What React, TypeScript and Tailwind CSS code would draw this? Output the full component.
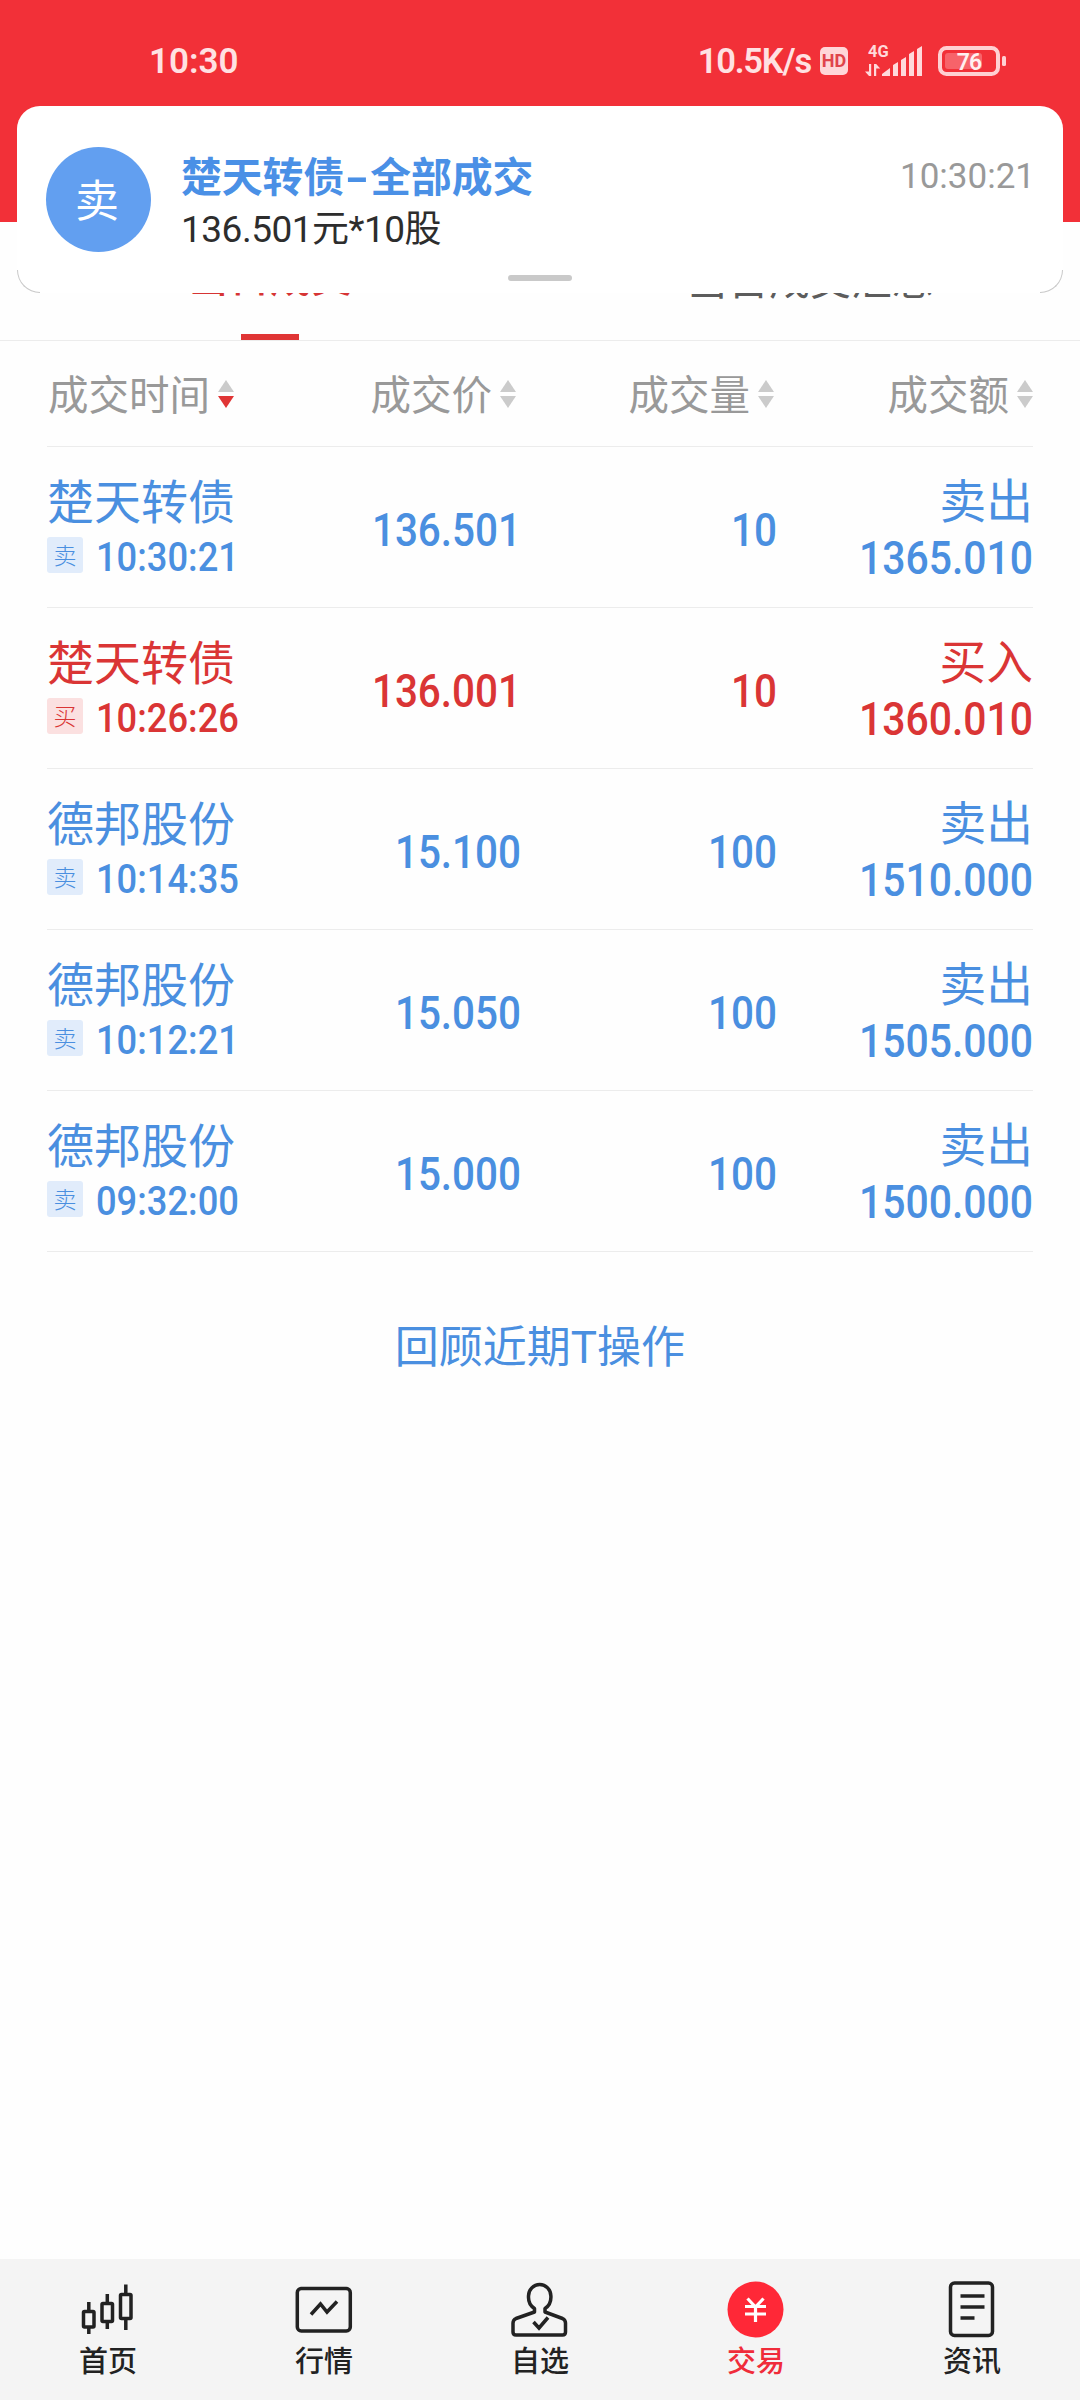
import clsx from "clsx";
import type { ReactNode } from "react";

type Side = "sell" | "buy";

const trades: { name: string; side: Side; time: string; price: string; volume: string; amount: string }[] = [
  { name: "楚天转债", side: "sell", time: "10:30:21", price: "136.501", volume: "10", amount: "1365.010" },
  { name: "楚天转债", side: "buy", time: "10:26:26", price: "136.001", volume: "10", amount: "1360.010" },
  { name: "德邦股份", side: "sell", time: "10:14:35", price: "15.100", volume: "100", amount: "1510.000" },
  { name: "德邦股份", side: "sell", time: "10:12:21", price: "15.050", volume: "100", amount: "1505.000" },
  { name: "德邦股份", side: "sell", time: "09:32:00", price: "15.000", volume: "100", amount: "1500.000" },
];

function StatusBar() {
  return (
    <div className="flex h-[222px] items-start justify-between bg-[#f23038] pl-[149px] pr-[74px] pt-[41px] text-[#ffe1e2]">
      <span className="text-[35px] font-semibold leading-[41px]">10:30</span>
      <div className="flex h-[39px] items-center">
        <span className="pt-[2px] text-[34.5px] font-semibold leading-[41px] tracking-[-1.2px]">10.5K/s</span>
        <span className="ml-[9px] flex h-[28px] w-[28px] items-center justify-center rounded-[5px] bg-[#ffd6d8] text-[18px] font-bold leading-none text-[#e0444b]">
          HD
        </span>
        <svg width="58" height="34" viewBox="0 0 58 34" className="ml-[16px] -mt-[2px]" fill="#ffd9db">
          <text x="4" y="14" fontSize="16.5" fontWeight="700">4G</text>
          <path d="M5 21h2.2v12H5zM5 33 1 28.500h4zM10 21h2.200v12H10zM12.200 21l4 4.500h-4z" />
          <path d="M18 33v-2l8-6v8zM29 33V22l5-3v14zM37 33V17l5-3v19zM45 33V11l5-3v25zM53 33V6l5-3v30z" />
        </svg>
        <svg width="68" height="30" viewBox="0 0 68 30" className="ml-[16px]">
          <rect x="2" y="2" width="58" height="26" rx="6.500" fill="none" stroke="#ffd0d2" strokeWidth="4" />
          <rect x="7" y="7" width="37" height="16" rx="3" fill="#f7636a" />
          <rect x="64" y="10" width="4" height="10" rx="1.500" fill="#ffd0d2" />
          <text x="31" y="23.500" textAnchor="middle" fontSize="23" fontWeight="600" letterSpacing="-0.8" fill="#fff0f0">76</text>
        </svg>
      </div>
    </div>
  );
}

function Notification() {
  return (
    <div className="absolute left-[17px] top-[106px] flex h-[187px] w-[1046px] rounded-[23px] bg-white pl-[29px] pr-[28px]">
      <div className="mt-[41px] flex h-[105px] w-[105px] items-center justify-center rounded-full bg-[#629ff0] pr-[3px] pt-[4px] text-[44px] leading-none text-white">
        卖
      </div>
      <div className="ml-[30px] mt-[47px]">
        <div className="text-[40.8px] font-bold leading-[50px] text-[#4a90e6]">
          楚天转债<span className="inline-block w-[26px] origin-center scale-x-[1.6] text-center">-</span>全部成交
        </div>
        <div className="text-[37px] leading-[54px] tracking-[-0.5px] text-[#2d2d2d]">136.501元*10股</div>
      </div>
      <div className="ml-auto mt-[50px] text-[35px] leading-[41px] text-[#999]">10:30:21</div>
      <span className="absolute bottom-[12px] left-1/2 h-[6px] w-[64px] -translate-x-1/2 rounded-full bg-[#c9c9c9]" />
      <span className="absolute bottom-0 left-0 h-[23px] w-[23px] rounded-bl-[23px] border-b border-l border-[#c8c8c8]" />
      <span className="absolute bottom-0 right-0 h-[23px] w-[23px] rounded-br-[23px] border-b border-r border-[#c8c8c8]" />
    </div>
  );
}

function Tabs() {
  return (
    <div className="flex h-[119px] border-b border-[#ececec] leading-[50px]">
      <div className="flex flex-1 flex-col items-center justify-between pt-[31px] text-[41px] font-medium text-[#d63434]">
        当日成交
        <span className="h-[6px] w-[58px] bg-[#e03535]" />
      </div>
      <div className="flex flex-1 justify-center pt-[34px] text-[41px] text-[#5c5c5c]">当日成交汇总</div>
    </div>
  );
}

function SortHead({ label, desc = false }: { label: string; desc?: boolean }) {
  return (
    <div className="flex items-center justify-end text-[40.5px] text-[#999]">
      <span className="whitespace-nowrap pt-[4px] leading-[50px]">{label}</span>
      <svg width="16" height="30" viewBox="0 0 16 30" className="ml-[8px] shrink-0">
        <path d="M8 1l8 12H0z" fill="#cbcbcb" />
        <path d="M0 17h16L8 29z" fill={desc ? "#e03535" : "#cbcbcb"} />
      </svg>
    </div>
  );
}

function Num({ children, className }: { children: ReactNode; className?: string }) {
  return <span className={clsx("inline-block font-medium", className)}>{children}</span>;
}

function TradeList() {
  return (
    <div className="mx-[47px]">
      <div className="grid h-[106px] grid-cols-[187px_282px_258px_259px] items-center border-b border-[#ececec]">
        <SortHead label="成交时间" desc />
        <SortHead label="成交价" />
        <SortHead label="成交量" />
        <SortHead label="成交额" />
      </div>
      {trades.map((t) => {
        const sell = t.side === "sell";
        return (
          <div
            key={t.time}
            className={clsx(
              "grid h-[161px] grid-cols-[217px_257px_256px_256px] items-center border-b border-[#ececec]",
              sell ? "text-[#4a8fe0]" : "text-[#da3535]"
            )}
          >
            <div>
              <div className="pt-px text-[47px] leading-[55px]">{t.name}</div>
              <div className="flex h-[50px] items-center">
                <span
                  className={clsx(
                    "flex h-[36px] w-[36px] items-center justify-center rounded-[3px] pt-[2px] text-[23px] font-light leading-none",
                    sell ? "bg-[#e1ecfb]" : "bg-[#fbe0e0]"
                  )}
                >
                  {sell ? "卖" : "买"}
                </span>
                <Num className="ml-[13px] origin-left scale-x-[0.885] pt-[4px] text-[41px] leading-[50px]">{t.time}</Num>
              </div>
            </div>
            <Num className="origin-right scale-x-[0.86] pt-[6px] text-right text-[47px]">{t.price}</Num>
            <Num className="origin-right scale-x-[0.86] pt-[6px] text-right text-[47px]">{t.volume}</Num>
            <div className="flex flex-col items-end">
              <div className="pt-px text-[46.7px] leading-[55px]">{sell ? "卖出" : "买入"}</div>
              <Num className="h-[50px] origin-right scale-x-[0.87] pt-[3px] text-[47px] leading-[50px]">{t.amount}</Num>
            </div>
          </div>
        );
      })}
    </div>
  );
}

function NavItem({ label, active = false, children }: { label: string; active?: boolean; children: ReactNode }) {
  return (
    <div className={clsx("flex flex-1 flex-col items-center pt-[20px]", active ? "text-[#f02c3a]" : "text-[#222]")}>
      <svg width="60" height="60" viewBox="0 0 60 60" fill="none" stroke="currentColor" strokeWidth="3.5">
        {children}
      </svg>
      <span className="mt-[5px] text-[29px] font-medium leading-[36px]">{label}</span>
    </div>
  );
}

function BottomNav() {
  return (
    <div className="mt-auto flex h-[141px] bg-[#f4f4f4]">
      <NavItem label="首页">
        <rect x="5.500" y="32.500" width="10.500" height="15.500" rx="1" />
        <rect x="24" y="24.500" width="10.500" height="18" rx="1" />
        <rect x="42.500" y="15.500" width="10.500" height="24" rx="1" />
        <path d="M10.800 23v9M10.800 48v7M29.300 15v9M29.300 43v7M47.800 5.500v9M47.800 40v11" />
      </NavItem>
      <NavItem label="行情">
        <rect x="3.300" y="9.500" width="53" height="42.500" rx="4" />
        <path d="M17 35.500l9.500-10.500 6.500 8 10-10.500" />
      </NavItem>
      <NavItem label="自选">
        <path
          d="M24.500 29.500C20.500 27 18.500 23 18.500 18.500V17a11.200 11.500 0 0 1 22.400 0V18.500C40.900 23 39 27 35 29.500V33L52.500 39.500Q55.500 41 55.500 44V53Q55.500 56 52.500 56H6Q3 56 3 53V44Q3 41 6 39.500L24.500 33Z"
          strokeLinejoin="round"
        />
        <path d="M23.500 43l5.500 6L38 38.500" />
      </NavItem>
      <NavItem label="交易" active>
        <circle cx="29.500" cy="30.500" r="28" fill="#ff2837" stroke="none" />
        <path d="M21.500 19.500l8 8.500 8-8.500M19 27.500h21M19 35h21M29.500 27.500V43" stroke="#fff" strokeWidth="3.200" />
      </NavItem>
      <NavItem label="资讯">
        <rect x="8.500" y="4" width="42" height="52.500" rx="4" />
        <path d="M18.500 17h24M18.500 28h24M18.500 39h14" />
      </NavItem>
    </div>
  );
}

export default function App() {
  return (
    <div className="relative flex h-[2400px] w-[1080px] flex-col overflow-hidden bg-[#fefefe] font-[Roboto,'Noto_Sans_CJK_SC',sans-serif]">
      <StatusBar />
      <Tabs />
      <TradeList />
      <button type="button" className="mx-auto mt-[68px] block text-[44px] leading-[56px] text-[#4a8fe0]">
        回顾近期T操作
      </button>
      <BottomNav />
      <Notification />
    </div>
  );
}
